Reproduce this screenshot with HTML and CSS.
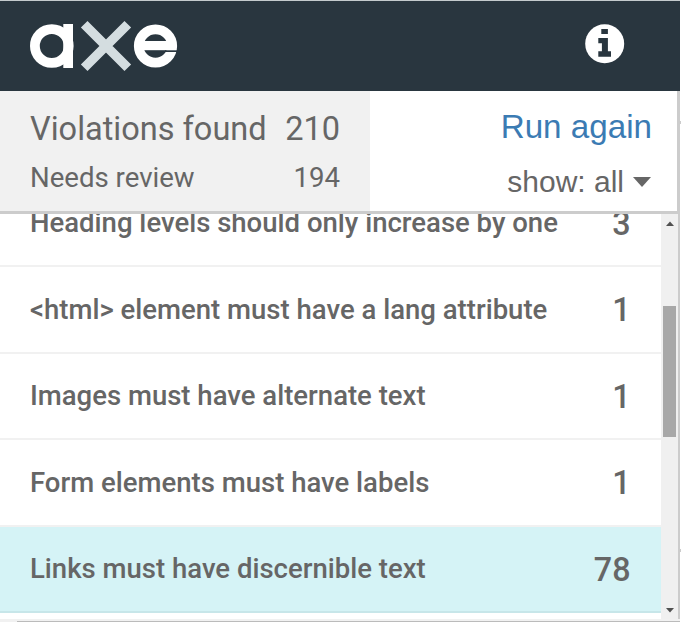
FILE: index.html
```html
<!DOCTYPE html>
<html lang="en">
<head>
<meta charset="utf-8">
<title>axe</title>
<link rel="stylesheet" href="styles.css">
</head>
<body>
<div class="panel">
  <header class="header">
    <svg class="logo" width="148" height="52" viewBox="30 20 148 52" role="img" aria-label="axe">
      <circle cx="51.8" cy="46" r="16.9" fill="none" stroke="#fff" stroke-width="9.8"/>
      <rect x="63.3" y="24" width="9.7" height="44" fill="#fff"/>
      <path d="M84.2 24.2 127.8 67.8M127.8 24.2 84.2 67.8" stroke="#d4dde0" stroke-width="9.4"/>
      <circle cx="155.5" cy="46" r="16.7" fill="none" stroke="#fff" stroke-width="9.8"/>
      <rect x="143" y="41" width="32" height="9.2" fill="#fff"/>
      <rect x="165" y="50.3" width="13" height="1.7" fill="#29363f"/>
    </svg>
    <svg class="info" width="40" height="40" viewBox="0 0 40 40" role="img" aria-label="Information">
      <circle cx="19.7" cy="19.7" r="19.5" fill="#fff"/>
      <path d="M16.3 5h6.6v5h-6.6zM13.3 14h9.6v13.3h3.1v5.5H13.3v-5.5h3.6v-8.1h-3.6z" fill="#29363f"/>
    </svg>
  </header>
  <section class="summary">
    <div class="totals">
      <div class="total violations"><span>Violations found</span><span>210</span></div>
      <div class="total review"><span>Needs review</span><span>194</span></div>
    </div>
    <div class="actions">
      <div class="run">Run again</div>
      <div class="show"><span>show: all</span><svg width="18" height="10" viewBox="0 0 18 10"><path d="M0 0h18L9 10z" fill="#666"/></svg></div>
    </div>
  </section>
  <div class="results">
    <div class="list">
      <div class="row first"><span>Heading levels should only increase by one</span><b>3</b></div>
      <div class="row"><span>&lt;html&gt; element must have a lang attribute</span><b>1</b></div>
      <div class="row"><span>Images must have alternate text</span><b>1</b></div>
      <div class="row"><span>Form elements must have labels</span><b>1</b></div>
      <div class="row selected"><span>Links must have discernible text</span><b>78</b></div>
    </div>
    <div class="scrollbar">
      <svg width="8" height="5" viewBox="0 0 8 5"><path d="M0 5 4 0.5 8 5z" fill="#505050"/></svg>
      <div class="thumb"></div>
      <svg class="down" width="8" height="5" viewBox="0 0 8 5"><path d="M0 0h8L4 4.5z" fill="#505050"/></svg>
    </div>
  </div>
  <div class="bottom"></div>
</div>
<div class="edge"><i></i><i></i></div>
</body>
</html>
```
FILE: styles.css
```css
* { box-sizing: border-box; }
body { margin: 0; display: flex; width: 681px; height: 622px; overflow: hidden; background: #fff; color: #666; font-family: Roboto, sans-serif; }
.panel { width: 680px; height: 622px; }
.header { height: 91px; display: flex; justify-content: space-between; padding: 19px 55px 0 30px; background: #29363f; border-top: 1px solid #c4cbcd; }
.info { margin-top: 4px; }
.summary { height: 123px; display: flex; width: 680px; border-right: 3px solid #ccc; border-bottom: 3px solid #ccc; }
.totals { width: 370px; padding: 18px 30px 0; background: #f1f1f1; }
.total { display: flex; justify-content: space-between; }
.violations { font-size: 32.5px; line-height: 40px; }
.review { font-size: 27.6px; line-height: 36px; margin-top: 11px; }
.actions { flex: 1; padding: 16px 25px 0 0; display: flex; flex-direction: column; align-items: flex-end; font-family: "Liberation Sans", Arial, sans-serif; }
.run { font-size: 33.2px; line-height: 40px; color: #3b7bb3; }
.show { font-size: 30px; line-height: 36px; margin: 17px 1px 0 0; display: flex; align-items: center; gap: 9px; }
.results { height: 405px; display: flex; border-right: 2px solid #ccc; overflow: hidden; }
.list { width: 661px; }
.row { height: 86.5px; display: flex; justify-content: space-between; align-items: center; padding: 0 30.5px 0 30px; border-bottom: 2.5px solid #f1f1f1; font-size: 27.53px; font-weight: 500; white-space: nowrap; }
.row b { padding-top: 1.5px; font-size: 32.3px; font-weight: 500; }
.first { margin-top: -33.5px; }
.selected { background: #d5f3f6; border-bottom-color: #c7e6e9; }
.scrollbar { flex: 1; display: flex; flex-direction: column; align-items: center; padding: 7px 0 6px; background: #f0f0f0; }
.thumb { width: 13px; height: 131px; margin-top: 80px; background: #a8a8a8; }
.down { margin-top: auto; }
.bottom { height: 3px; background: linear-gradient(#f1f1f1, #f1f1f1) 0 0 / 100% 2px no-repeat, linear-gradient(#bbb, #bbb) 17px 2px no-repeat, #f1f1f1; }
.edge { width: 1px; padding-top: 121px; }
.edge i { display: block; height: 3px; background: #ccc; }
.edge i + i { margin-top: 425px; }
```
